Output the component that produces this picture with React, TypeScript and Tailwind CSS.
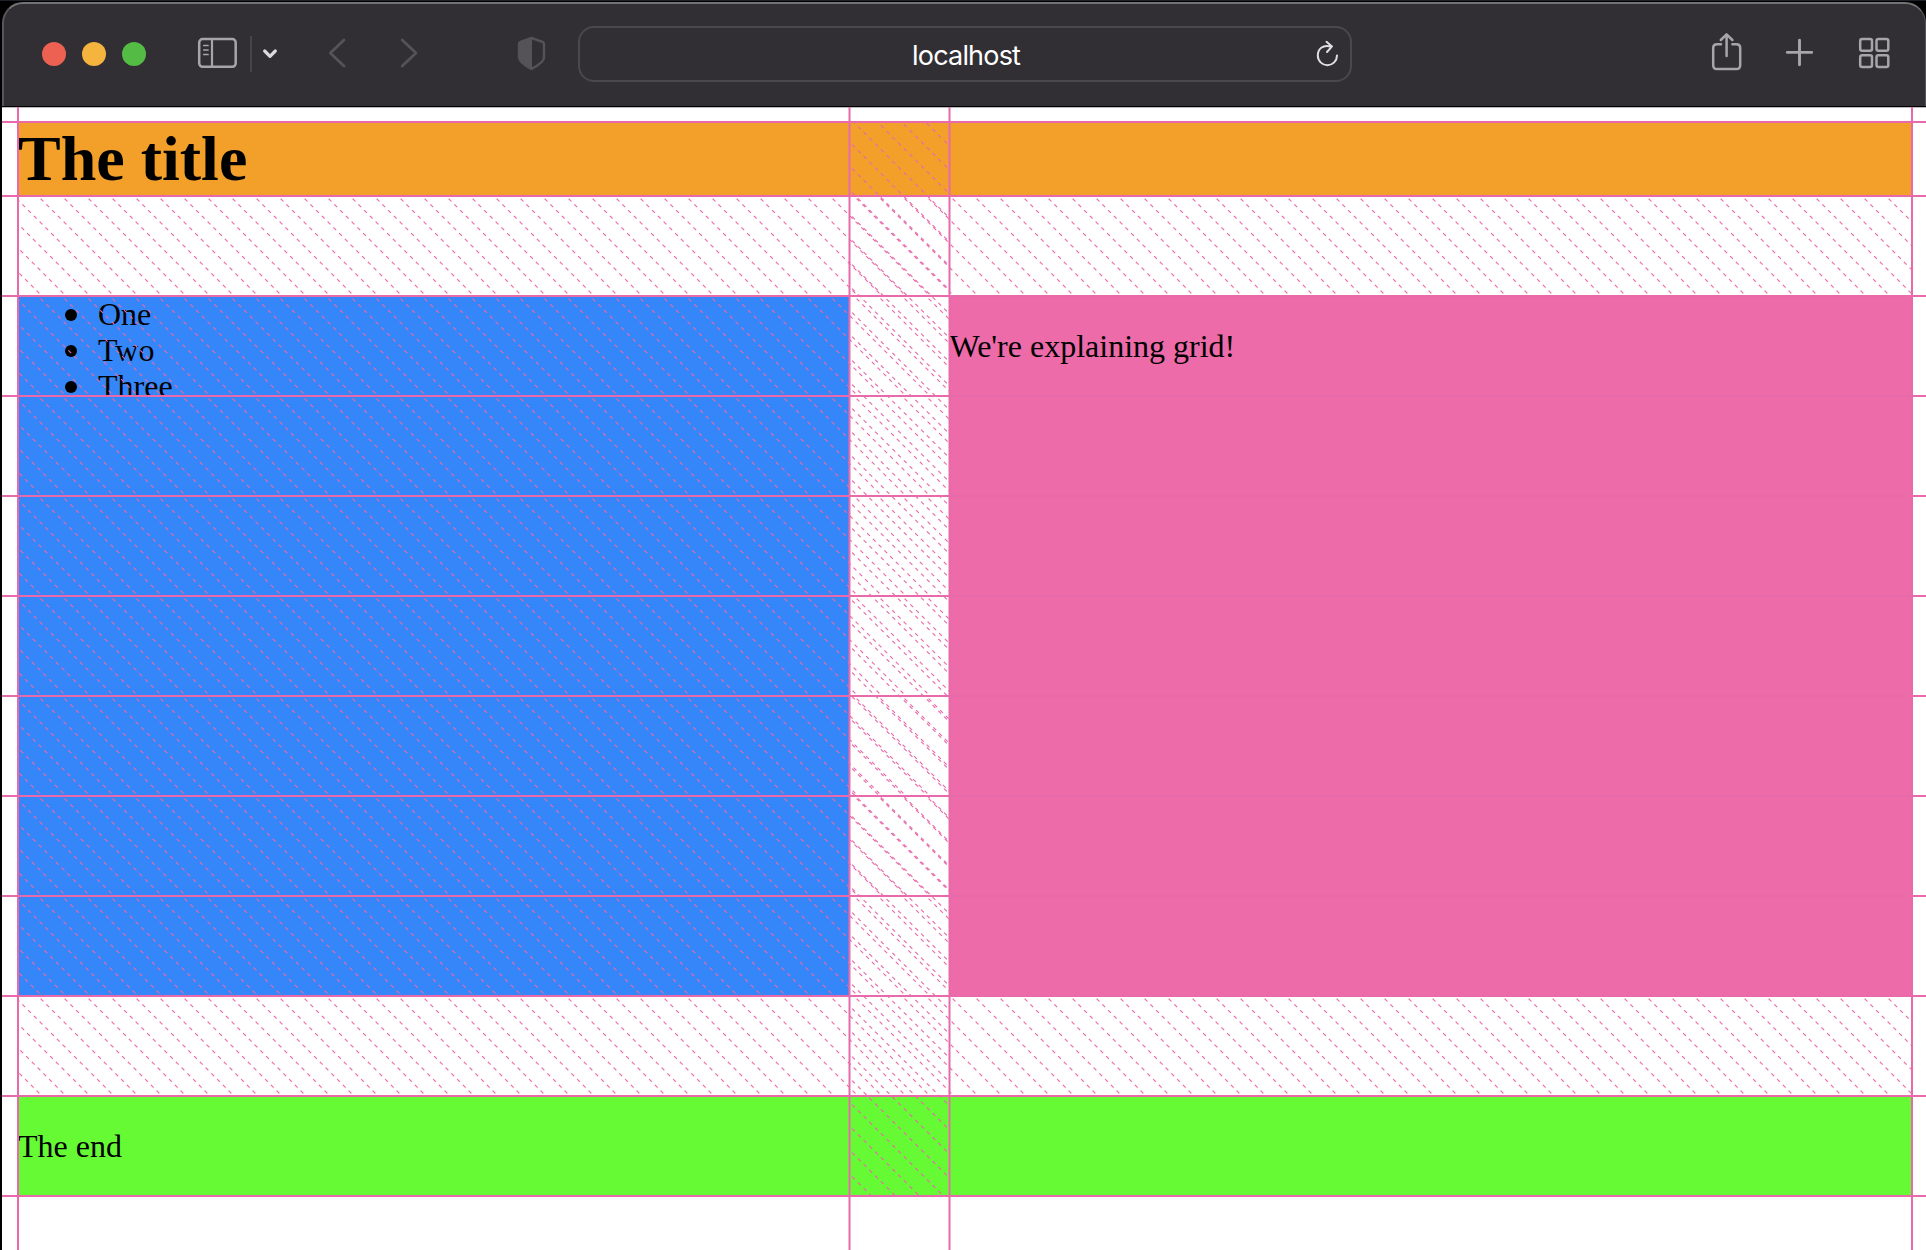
import React from "react";

const PINK = "#e86aaa";
const ROW_LINES = [122, 196, 296, 396, 496, 596, 696, 796, 896, 996, 1096, 1196];
const ROW_GAPS = ROW_LINES.slice(1, 10);
const LEFT = 18;
const RIGHT = 1912;
const COL_A = 849.5;
const COL_B = 949.5;

function rowHatch(top: number) {
  let d = "";
  for (let x = LEFT - 100; x < RIGHT; x += 24) d += `M${x} ${top}L${x + 100} ${top + 100}`;
  return d;
}

function columnHatch() {
  let d = "";
  for (let y = 22; y < 1196; y += 24) d += `M${COL_A} ${y}L${COL_B} ${y + 100}`;
  return d;
}

// Track lines and gap hatching drawn on top of the page grid.
function GridOverlay() {
  return (
    <svg className="pointer-events-none absolute inset-0" width="1926" height="1250" viewBox="0 0 1926 1250" fill="none">
      <defs>
        <clipPath id="rows">
          <path d={`M${LEFT} 196H${RIGHT}V296H${COL_B}V996H${RIGHT}V1096H${LEFT}Z`} />
        </clipPath>
        <clipPath id="column"><rect x={COL_A} y="122" width="100" height="1074" /></clipPath>
        <clipPath id="page"><rect x="2" y="107" width="1924" height="1143" /></clipPath>
      </defs>
      <g stroke={PINK} strokeWidth="1.18" strokeDasharray="4 4.13" strokeDashoffset="4.47">
        <g clipPath="url(#column)"><path d={columnHatch()} /></g>
        <g clipPath="url(#rows)">
          {ROW_GAPS.map((y) => <path key={y} d={rowHatch(y)} />)}
        </g>
      </g>
      <g stroke={PINK} strokeWidth="2" clipPath="url(#page)">
        {[LEFT, COL_A, COL_B, RIGHT].map((x) => <path key={x} d={`M${x} 107V1250`} />)}
        {ROW_LINES.map((y) => <path key={y} d={`M2 ${y}H1926`} />)}
      </g>
    </svg>
  );
}

function Toolbar() {
  return (
    <header className="bg-[linear-gradient(#1b2127_1px,#000_1px)] pl-[2px] pt-[2px]">
      <div className="flex h-[104px] items-start rounded-t-[21px] border-t-2 border-l-2 border-r border-t-[#737274] border-l-[#57565a] border-r-[#57565a] bg-[#312f34]">
        <div className="ml-[38px] mt-[38px] flex gap-4">
          <span className="size-6 rounded-full bg-[#ed6153]" />
          <span className="size-6 rounded-full bg-[#f5b43d]" />
          <span className="size-6 rounded-full bg-[#54bb45]" />
        </div>
        <svg className="ml-[50px] mt-[30px] shrink-0" width="84" height="44" viewBox="196 34 84 44" fill="none" strokeLinecap="round" strokeLinejoin="round">
          <rect x="199.2" y="39" width="36.5" height="27.8" rx="3.5" stroke="#a7a5aa" strokeWidth="2.5" />
          <path d="M212 39V67" stroke="#a7a5aa" strokeWidth="2.2" />
          <path d="M203.8 45.5H208M203.8 50H208M203.8 54.5H208" stroke="#a7a5aa" strokeWidth="1.7" />
          <path d="M251 36V72" stroke="#454449" strokeWidth="2" strokeLinecap="butt" />
          <path d="M264.7 51L270 56.3L275.3 51" stroke="#dad9dc" strokeWidth="3.2" />
        </svg>
        <svg className="ml-[46px] mt-[30px] shrink-0" width="96" height="44" viewBox="326 34 96 44" fill="none" stroke="#545358" strokeWidth="2.8" strokeLinecap="round" strokeLinejoin="round">
          <path d="M344 40L330.3 53L344 66M402.2 40L416 53L402.2 66" />
        </svg>
        <svg className="ml-[94px] mt-[32px] shrink-0" width="30" height="38" viewBox="516 36 30 38">
          <path d="M531.5 38L542.5 41.9Q544 42.5 544 44V57.5Q544 62.5 531.5 68.9Q519 62.5 519 57.5V44Q519 42.5 520.5 41.9Z" fill="none" stroke="#545358" strokeWidth="2.4" strokeLinejoin="round" />
          <path d="M532 38L520.5 41.9Q519 42.5 519 44V57.5Q519 62.5 532 69Z" fill="#545358" />
        </svg>
        <div className="ml-[32px] mt-[22px] flex h-14 w-[774px] shrink-0 items-center rounded-[16px] border-2 border-[#49484d]">
          <span className="ml-[332px] mt-[4px] w-[120px] whitespace-nowrap font-['Inter',sans-serif] text-[27px] leading-8 tracking-[-0.8px] text-white">localhost</span>
          <svg className="ml-[280px] shrink-0" width="28" height="36" viewBox="1312 36 28 36" fill="none" stroke="#dfdee0" strokeWidth="2" strokeLinecap="round" strokeLinejoin="round">
            <path d="M1331 46.6C1322.5 44 1317.8 49.5 1317.8 55.6A9.6 9.6 0 0 0 1337 55.6M1326.5 41.8L1332 46.4L1327 52" />
          </svg>
        </div>
        <svg className="ml-[356px] mt-[28px] shrink-0" width="186" height="44" viewBox="1708 32 186 44" fill="none" stroke="#a7a5aa" strokeWidth="2.5" strokeLinecap="round" strokeLinejoin="round">
          <path d="M1721 44.3H1717Q1713.2 44.3 1713.2 48.1V65.2Q1713.2 69 1717 69H1736.4Q1740.2 69 1740.2 65.2V48.1Q1740.2 44.3 1736.4 44.3H1732.4" />
          <path d="M1726.6 34.5V56M1720.8 40L1726.6 34.3L1732.4 40" />
          <path d="M1799.5 40.3V64.7M1787.3 52.4H1811.7" strokeWidth="2.9" />
          <rect x="1860.2" y="39" width="11.8" height="11.8" rx="2" />
          <rect x="1876.5" y="39" width="11.8" height="11.8" rx="2" />
          <rect x="1860.2" y="55.2" width="11.8" height="11.8" rx="2" />
          <rect x="1876.5" y="55.2" width="11.8" height="11.8" rx="2" />
        </svg>
      </div>
      <div className="h-px bg-black" />
      <div className="h-px bg-[#b9b9b9]" />
    </header>
  );
}

export default function App() {
  return (
    <div className="relative h-[1250px] w-[1926px] overflow-hidden bg-black">
      <Toolbar />
      <main className="ml-[2px] h-[1142px] bg-white pl-4 pr-[14px] pt-[14px] font-['Liberation_Serif',serif] text-[32px] leading-9 text-black">
        <div className="grid grid-cols-[831.5px_962.5px] gap-x-[100px]">
          <h1 className="col-span-2 mb-[100px] h-[74px] bg-[#f3a02b] text-[64px] font-bold leading-[74px]">The title</h1>
          <ul className="h-[700px] bg-[#3586f8] pl-20">
            {["One", "Two", "Three"].map((item) => (
              <li key={item} className="flex items-center">
                <span className="-ml-[33px] mr-[21px] mt-[2px] size-3 rounded-full bg-black" />
                {item}
              </li>
            ))}
          </ul>
          <div className="h-[700px] bg-[#ec6ba8] pt-8">
            <p>We're explaining grid!</p>
          </div>
          <footer className="col-span-2 mt-[100px] h-[100px] bg-[#66fa35] py-8">
            <p>The end</p>
          </footer>
        </div>
      </main>
      <GridOverlay />
    </div>
  );
}
